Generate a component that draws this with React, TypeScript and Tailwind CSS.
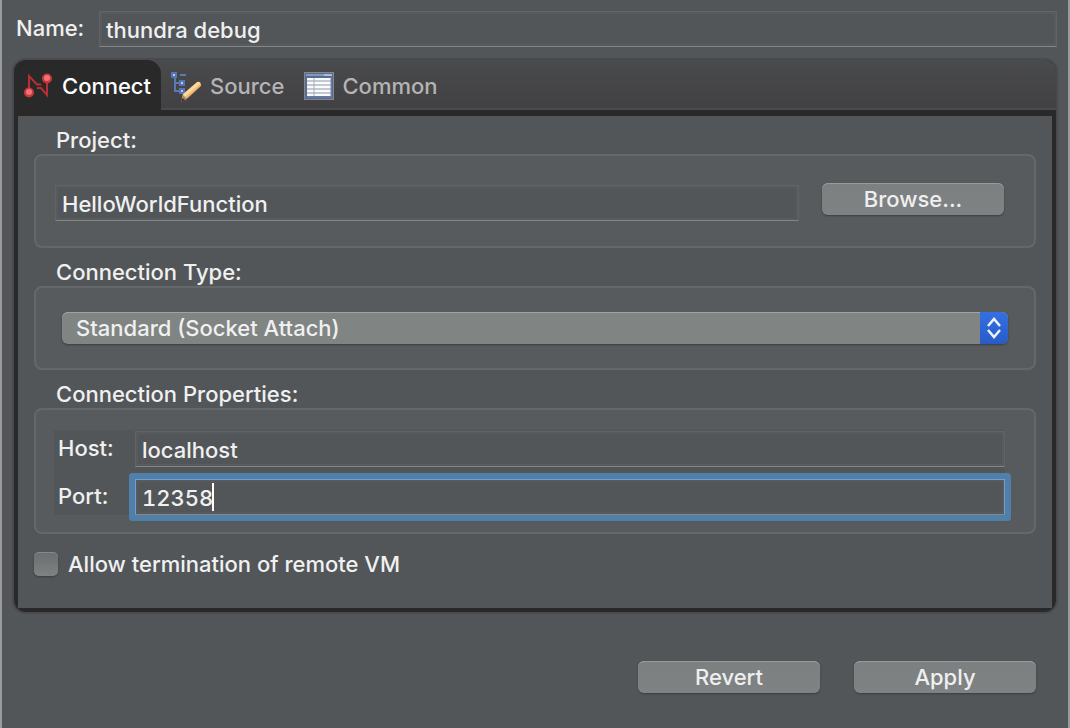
import React, { useState } from "react";
import clsx from "clsx";

const fieldClass =
  "block h-9 w-full min-w-0 border border-[#5f6466] border-b-[#838788] bg-[#525659] px-1.5 pt-0.5 text-[22px] font-medium text-[#f0f0f0] shadow-[inset_0_0_0_2px_#575b5d] outline-none";

const buttonClass =
  "h-8 w-[182px] shrink-0 rounded-[6px] bg-linear-to-b from-[#7c8081] to-[#7e8282] pt-px text-[22px] leading-[31px] text-[#efefef] shadow-[inset_0_1px_0_#989b9c,0_1px_2px_#3b3e40]";

function ConnectIcon() {
  return (
    <svg width="30" height="28" viewBox="0 0 30 28" aria-hidden="true">
      <g fill="none" stroke="#b52f33" strokeWidth="2">
        <path d="M5 18V4l8 8.500h4" />
        <path d="M23 8v15l-6-7h-4" />
      </g>
      <circle cx="5" cy="20.5" r="5" fill="#cb363b" />
      <circle cx="23" cy="6.5" r="5" fill="#cb363b" />
      <circle cx="5" cy="20" r="3" fill="#ec7476" />
      <circle cx="23" cy="6" r="3" fill="#ec7476" />
    </svg>
  );
}

function SourceIcon() {
  return (
    <svg width="31" height="32" viewBox="0 0 31 32" aria-hidden="true">
      <defs>
        <linearGradient id="pencil" gradientUnits="userSpaceOnUse" x1="18" y1="17" x2="24" y2="24">
          <stop offset="0" stopColor="#f0b868" />
          <stop offset="0.35" stopColor="#fae0ae" />
          <stop offset="0.7" stopColor="#f0b464" />
          <stop offset="1" stopColor="#a86f35" />
        </linearGradient>
      </defs>
      <path d="M4 6v15h6M4 13h6M9 5h6" fill="none" stroke="#5c79b5" strokeWidth="2" />
      <g fill="#b9c9e8" stroke="#5775b5" strokeWidth="2">
        <rect x="1" y="3" width="4" height="4" />
        <rect x="9" y="11" width="4" height="4" />
        <rect x="9" y="19" width="4" height="4" />
      </g>
      <path d="M26 12q4-1 4 4L17 28l-7 4 2-8z" fill="url(#pencil)" />
      <path d="M12 25l4 4-6 3z" fill="#a88766" />
      <path d="M11 28l3 2-4 2z" fill="#3d302b" />
    </svg>
  );
}

function CommonIcon() {
  return (
    <svg width="30" height="28" viewBox="0 0 30 28" aria-hidden="true">
      <rect x="0.5" y="0.5" width="29" height="27" fill="#566c98" stroke="#8c8682" />
      <path d="M2 2h18v2H2z" fill="#8498bb" />
      <path d="M20 2h8v2h-8z" fill="#aebcd6" />
      <path d="M3 6h24v18H3z" fill="#fafbfd" />
      <path d="M3 9h24M3 13h24M3 17h24M3 21h24" stroke="#c3c8d3" strokeWidth="2" />
      <path d="M10 6v18" stroke="#a5adbd" strokeWidth="1" />
      <path d="M27 5v20H3" fill="none" stroke="#7289b2" strokeWidth="1" />
    </svg>
  );
}

function Group({ title, className, children }: { title: string; className: string; children: React.ReactNode }) {
  return (
    <section className="mb-2.5" aria-label={title}>
      <h2 className="pl-[22px] leading-7 font-medium">{title}</h2>
      <div className={clsx("rounded-[8px] border-2 border-[#63686a] bg-[#575b5d]", className)}>{children}</div>
    </section>
  );
}

const tabs = [
  { name: "Connect", icon: <ConnectIcon /> },
  { name: "Source", icon: <SourceIcon /> },
  { name: "Common", icon: <CommonIcon /> },
];

export default function App() {
  const [active, setActive] = useState("Connect");
  const [port, setPort] = useState("12358");
  const [portFocused, setPortFocused] = useState(true);

  return (
    <main className="min-h-screen border-x-2 border-[#9b9b9b] bg-[#525659] font-[Inter,sans-serif] text-[22px] font-medium text-[#f0f0f0]">
      <div className="flex pt-[11px] pr-[11px] pl-3.5">
        <label htmlFor="name" className="w-[83px] shrink-0 leading-[34px]">
          Name:
        </label>
        <input id="name" className={fieldClass} defaultValue="thundra debug" />
      </div>

      <div className="mx-2.5 mt-[11px] overflow-hidden rounded-[14px] border-2 border-[#484a4d] bg-[#292929]">
        <div role="tablist" className="flex h-[50px] bg-linear-to-b from-[#4a4b4d] to-[#414042]">
          {tabs.map((tab) => (
            <button
              key={tab.name}
              role="tab"
              aria-selected={active === tab.name}
              onClick={() => setActive(tab.name)}
              className={clsx(
                "flex items-center gap-2 border-b-2 px-2.5 pt-1",
                active === tab.name
                  ? "rounded-tr-[14px] border-[#292929] bg-[#292929] text-white"
                  : "border-[#4b4a4c] text-[#b4b4b4]",
              )}
            >
              {tab.icon}
              {tab.name}
            </button>
          ))}
          <div className="flex-1 border-b-2 border-[#4b4a4c]" />
        </div>

        <div role="tabpanel" className="mx-1 mt-1.5 mb-1 bg-[#525659] px-4 pt-2.5 pb-[30px]">
          <Group title="Project:" className="flex gap-[23px] pt-[29px] pr-[30px] pb-[25px] pl-[19px]">
            <input aria-label="Project" className={fieldClass} defaultValue="HelloWorldFunction" />
            <button className={clsx(buttonClass, "-mt-0.5")}>Browse...</button>
          </Group>

          <Group title="Connection Type:" className="px-[26px] py-6">
            <div className="relative">
              <select
                aria-label="Connection Type"
                className="block h-8 w-full appearance-none rounded-[6px] bg-[#808483] px-3.5 text-[22px] font-medium text-[#f0f0f0] shadow-[inset_0_1px_0_#a0a3a3,0_1px_2px_#3b3e40] outline-none"
              >
                <option>Standard (Socket Attach)</option>
              </select>
              <span className="pointer-events-none absolute inset-y-0 right-0 flex w-7 items-center justify-center rounded-r-[6px] bg-linear-to-b from-[#3470e2] to-[#285bc8]">
                <svg width="14" height="22" viewBox="0 0 14 22" fill="none" stroke="#edf2fd" strokeWidth="2.5" aria-hidden="true">
                  <path d="M1 9l6-7 6 7M1 13l6 7 6-7" />
                </svg>
              </span>
            </div>
          </Group>

          <Group title="Connection Properties:" className="pt-5 pr-[29px] pb-[17px] pl-[18px]">
            <div className="flex flex-col gap-3 bg-[#525659] pt-px">
              <div className="flex">
                <label htmlFor="host" className="w-[81px] shrink-0 pl-1 leading-[34px]">
                  Host:
                </label>
                <input id="host" className={fieldClass} defaultValue="localhost" />
              </div>
              <div className="flex">
                <label htmlFor="port" className="w-[81px] shrink-0 pl-1 leading-[34px]">
                  Port:
                </label>
                <div className={clsx("relative flex-1 tabular-nums", portFocused && "rounded-[1px] ring-6 ring-[#5080aa]")}>
                  <input
                    id="port"
                    className={clsx(fieldClass, "tabular-nums", portFocused && "border-[#6da0cd] border-b-[#6da0cd] caret-transparent")}
                    value={port}
                    onChange={(e) => setPort(e.target.value)}
                    onFocus={() => setPortFocused(true)}
                    onBlur={() => setPortFocused(false)}
                  />
                  {portFocused && (
                    <span className="pointer-events-none absolute inset-y-1 left-0 flex pl-1.5" aria-hidden="true">
                      <span className="invisible">{port}</span>
                      <span className="w-0.5 bg-white" />
                    </span>
                  )}
                </div>
              </div>
            </div>
          </Group>

          <label className="mt-4 flex items-center gap-2.5 leading-7">
            <input
              type="checkbox"
              className="size-6 appearance-none rounded-[5px] bg-linear-to-b from-[#6a6e6f] to-[#7e8282] shadow-[inset_0_1px_0_#85898a,0_1px_2px_#3b3e40] checked:from-[#3470e2] checked:to-[#285bc8]"
            />
            Allow termination of remote VM
          </label>
        </div>
      </div>

      <div className="flex justify-end gap-[34px] pt-[47px] pr-8 pb-8">
        <button className={buttonClass}>Revert</button>
        <button className={buttonClass}>Apply</button>
      </div>
    </main>
  );
}
